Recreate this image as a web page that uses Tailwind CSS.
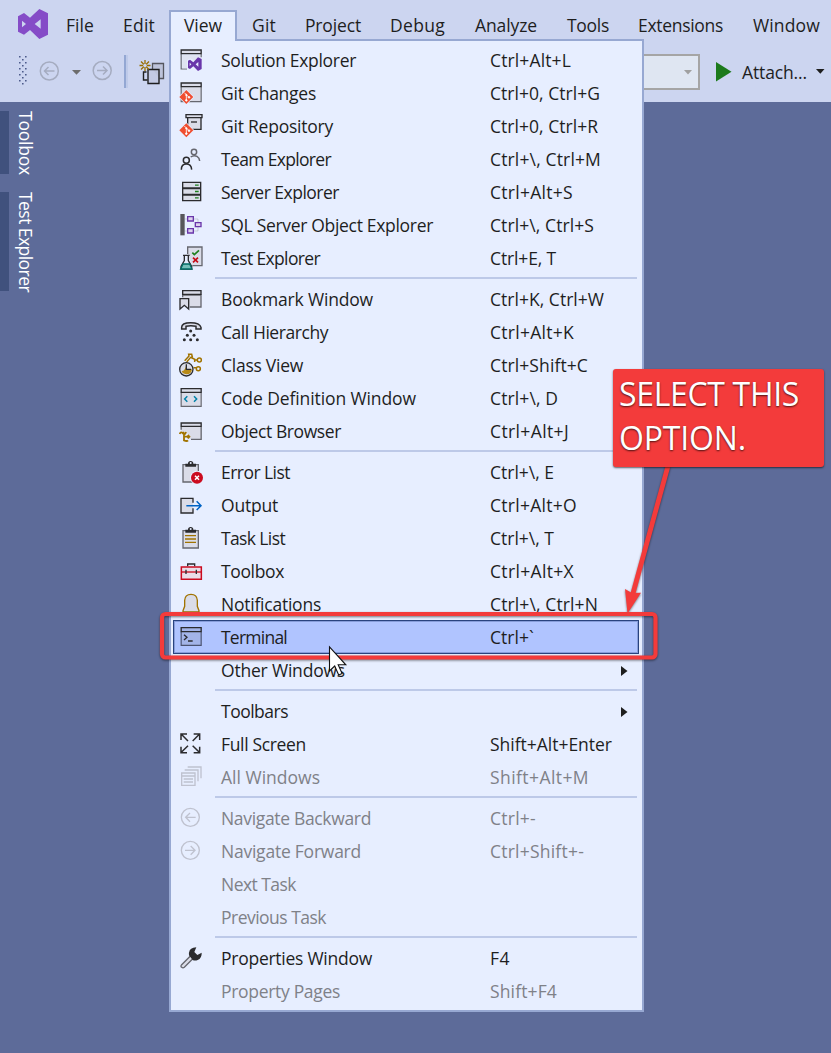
<!DOCTYPE html>
<html lang="en">
<head>
<meta charset="utf-8">
<title>Visual Studio – View menu</title>
<script src="https://cdn.jsdelivr.net/npm/@tailwindcss/browser@4"></script>
</head>
<body class="relative w-[831px] h-[1053px] overflow-hidden bg-[#5d6b99] font-['Open_Sans','Noto_Sans',sans-serif] text-[17.5px] leading-[33px] text-[#1e1e1e] whitespace-nowrap">

<header class="h-[102px] bg-[#ccd5f0] flex flex-col">
  <nav class="h-[50px] mb-[2px] flex items-center">
    <svg class="w-[66px] h-[52px] shrink-0 self-start" viewBox="0 0 198 156"><path fill="#854cc7" fill-rule="evenodd" d="M118 27l26 13v64l-26 13-28-27-18 14-18-9V49l18-10 18 14zM122 58v28l-18-14zM66 62v20l12-10z"/></svg>
    <span class="w-[57px]"><span data-w="28">File</span></span>
    <span class="w-[129px]"><span data-w="32">Edit</span></span>
    <span class="w-[53px]"><span data-w="24">Git</span></span>
    <span class="w-[85px]"><span data-w="56">Project</span></span>
    <span class="w-[85px]"><span data-w="55">Debug</span></span>
    <span class="w-[92px]"><span data-w="62">Analyze</span></span>
    <span class="w-[71px]"><span data-w="42">Tools</span></span>
    <span class="w-[115px]"><span data-w="85">Extensions</span></span>
    <span data-w="67">Window</span>
  </nav>
  <div class="h-[50px] flex">
    <svg class="w-[170px] h-[50px] shrink-0" viewBox="0 52 170 50" fill="none">
      <defs><pattern id="grip" x="19" y="56" width="6" height="6" patternUnits="userSpaceOnUse"><path fill="#4d5c8c" d="M0 0h1.6v1.6H0zM3 3h1.6v1.6H3z"/></pattern></defs>
      <path fill="url(#grip)" d="M19 56h8v29h-8z"/>
      <g stroke="#a5acc0" stroke-width="1.5"><circle cx="49.3" cy="71" r="9"/><path d="M54.5 71h-10m4-4l-4 4 4 4"/><circle cx="102.2" cy="70.5" r="9"/><path d="M97 70.500h10m-4-4l4 4-4 4"/></g>
      <path fill="#6d6d6d" d="M72 70h9l-4.500 4.800z"/>
      <path fill="#93a7d3" d="M124 55h2v33h-2z"/><path fill="#becae9" d="M126 55h2v33h-2z"/>
      <path d="M152.500 69v-5.500h11v15h-4" fill="#bdc3da" stroke="#55565e" stroke-width="1.300"/>
      <path d="M146.500 72h-3v8h4" stroke="#1e1e1e" stroke-width="1.400"/><path d="M148 69.500h11v14h-11z" stroke="#1e1e1e" stroke-width="1.400" fill="#bdc3da" fill-opacity=".6"/>
      <g stroke="#996f00" stroke-width="1.300"><path d="M145 60v11M139.500 65.500h11M141 61.500l8 8M149 61.500l-8 8"/></g><circle cx="145" cy="65.500" r="1.800" fill="#ccd5f0"/>
    </svg>
    <div class="w-[530px] h-[36px] mt-[2px] border-2 border-[#a5a5a5] bg-[#dfe6f2] flex items-center justify-end pr-[6px]"><svg class="w-[8px] h-[5px]" viewBox="0 0 8 5"><path fill="#a0a0a0" d="M0 0h8L4 4.500z"/></svg></div>
    <svg class="w-[16px] h-[20px] ml-4 mt-[10px]" viewBox="0 0 16 20"><path fill="#1c7a1c" d="M0 0l15.500 9.700L0 19.500z"/></svg>
    <span class="ml-[10px] mt-[4px] w-[75px]"><span data-w="65">Attach...</span></span>
    <svg class="w-[9px] h-[5px] mt-[17px] -ml-[1px]" viewBox="0 0 9 5"><path fill="#1e1e1e" d="M0 0h8.500L4.300 4.800z"/></svg>
  </div>
</header>

<aside class="w-[42px] pt-[9px] flex flex-col gap-[18px] text-white">
  <div class="h-[63px] border-l-[9px] border-[#40517d] [writing-mode:vertical-rl] leading-[32px]"><span data-w="64">Toolbox</span></div>
  <div class="h-[99px] border-l-[9px] border-[#40517d] [writing-mode:vertical-rl] leading-[32px]"><span data-w="100">Test Explorer</span></div>
</aside>

<!-- Open drop-down -->
<div class="absolute left-[169px] top-[39px] w-[475px] h-[973px] border-2 border-[#97a8d2] bg-[#e7eeff] pt-[3px]">
  <ul id="menu"></ul>
</div>
<div class="absolute left-[169px] top-[10px] w-[68px] h-[31px] border-2 border-b-0 border-[#97a8d2] bg-[#e7eeff] pl-[13px] leading-[27px]"><span data-w="38">View</span></div>

<!-- Annotation and pointer -->
<svg class="absolute inset-0 w-[831px] h-[1053px] drop-shadow-[0_1px_1px_rgba(0,0,0,0.5)]" viewBox="0 0 831 1053" fill="none">
  <rect x="162" y="614" width="493.500" height="43.500" rx="3.500" stroke="#f33b3b" stroke-width="4.200"/>
  <path d="M668 466L632 597" stroke="#f33b3b" stroke-width="4.800"/>
  <path d="M627.500 613.500L625 589l7 4 9-.3z" fill="#f33b3b"/>
</svg>
<div class="absolute left-[613px] top-[369px] w-[211px] h-[98px] rounded-[3px] bg-[#f33b3b] text-white text-[32px] leading-[44px] pl-[6px] pt-[3px] shadow-[0_1px_2px_rgba(0,0,0,0.6)] [text-shadow:0_1px_2px_rgba(0,0,0,0.7)]"><div><span data-w="180" data-size="32">SELECT THIS</span></div><div><span data-w="127" data-size="32">OPTION.</span></div></div>
<svg class="absolute left-[328px] top-[645px] w-[20px] h-[32px]" viewBox="0 0 20 32"><path d="M1.500 2v24l5.200-5 4 9 3.400-1.600-3.900-8.600h7.600z" fill="#fff" stroke="#111" stroke-width="1.100"/></svg>

<script>
// Icons share a 72-unit canvas drawn at 24px.
const D = '#2b2b2e', G = '#66676f', F = '#dadce8';
const gem = (x, y) => `<path d="M${x} ${y-24}l24 24-24 24-24-24z" fill="#e7eeff"/><path d="M${x} ${y-21}l21 21-21 21-21-21z" fill="#f04e30"/><g stroke="#fff" stroke-width="2.500" fill="#fff"><path d="M${x-6} ${y-13}l6 6v18M${x} ${y-7}l9 9" fill="none"/><circle cx="${x}" cy="${y+10}" r="2.500"/><circle cx="${x+8}" cy="${y+1}" r="2.500"/><circle cx="${x}" cy="${y-6}" r="2"/></g>`;
const win = (y, b) => `<path d="M6.500 ${y+12}V${b}H66.500V${y+12}" fill="${F}" stroke="${G}" stroke-width="3.500"/><path d="M6.500 ${y}h60v11h-60z" fill="${F}" stroke="${D}" stroke-width="4"/>`;
const clip = `<path d="M12 14h46v52H12z" fill="${F}" stroke="${G}" stroke-width="4"/><path d="M19 20v-9h8a8 8 0 0 1 16 0h8v9z" fill="${D}"/><circle cx="35" cy="9" r="3" fill="#e7eeff"/>`;
const I = {
 sol: `<path d="M6.500 18v45H24M66.500 18v10" stroke="${G}" stroke-width="3.500"/><path d="M10 20h53v10L48 40l-14-9-10 6v24H10z" fill="#dfe3f1"/><path d="M6.500 6h60v11h-60z" fill="${F}" stroke="${D}" stroke-width="4"/><path d="M57 28l11 5v30l-11 6-14-14-10 8-6-3V38l6-3 10 8zm1 14v14l-8-7zM32 44v10l5-5z" fill="#6936aa" fill-rule="evenodd"/>`,
 gitc: win(6,62)+gem(22,48),
 gitr: `<path d="M26 12v34h40V12" fill="${F}" stroke="${D}" stroke-width="4"/><path d="M21 2h48v9H21z" fill="${F}" stroke="${D}" stroke-width="4"/><path d="M36 24h18" stroke="${D}" stroke-width="4"/>`+gem(22,49),
 team: `<g stroke-width="4.500"><g stroke="${G}"><circle cx="45" cy="15" r="8"/><path d="M35 30q10-7 19-2 7 4 8 14"/></g><g stroke="${D}"><circle cx="22" cy="40" r="9"/><path d="M7 68q0-17 15-17t16 17"/></g></g>`,
 server: `<g stroke="${D}" stroke-width="4" fill="${F}"><path d="M11 7h54v17H11zM11 26h54v17H11zM11 45h54v17H11z"/></g><path d="M48 15.500h11M48 34.500h11M48 53.500h11" stroke="#1f801f" stroke-width="4"/>`,
 sql: `<path d="M4 3h13v64H4z" fill="#56565b"/><path d="M17 18h7M17 54h7M43 18h14v10M43 54h14V42" stroke="${G}" stroke-width="2" stroke-opacity=".4"/><path d="M26 11h17v13H26zM49 29h17v12H49zM26 47h17v13H26z" stroke="#6936aa" fill="#ddd2ef" stroke-width="4"/>`,
 test: `<path d="M26 24V3h43v56H40" fill="${F}" stroke="${G}" stroke-width="4"/><path d="M40 20l6 6 14-13" stroke="#1f801f" stroke-width="5"/><path d="M42 35l15 14m0-14L42 49" stroke="#c50b17" stroke-width="5"/><path d="M12 28h20M16 28v16L6 61v8h32v-8L28 44V28" stroke="${D}" stroke-width="4" fill="#e7eeff"/><path d="M12 54h20l7 15H5z" fill="#75bfb9" stroke="#006b64" stroke-width="4"/>`,
 book: `<path d="M32 60h34V24H11v7" fill="${F}" stroke="${G}" stroke-width="4"/><path d="M11 11h55v11H11z" fill="${F}" stroke="${D}" stroke-width="4"/><path d="M3 35h26v31L16 55 3 66z" fill="${F}" stroke="${D}" stroke-width="4"/>`,
 call: `<path d="M8 22Q8 8 35 8t31 14v5H51v-8q-16-3-30 0v8H8z" fill="${F}" stroke="${D}" stroke-width="4.500"/><g fill="${D}"><circle cx="35" cy="33" r="4.500"/><circle cx="25" cy="46" r="4.500"/><circle cx="45" cy="46" r="4.500"/><circle cx="16" cy="59" r="4.500"/><circle cx="35" cy="59" r="4.500"/><circle cx="55" cy="59" r="4.500"/></g>`,
 cls: `<g stroke="#a17300" stroke-width="4.500"><path d="M17 23L30 9l-1-5h9l2 8-5 1-12 14M35 13l12 6v8M46 21h10M44 44h7"/><circle cx="61" cy="21" r="6"/><circle cx="58" cy="47" r="6"/></g><circle cx="22" cy="49" r="20" fill="${F}" stroke="${D}" stroke-width="4"/><path d="M22 32v17h17q-1 15-17 15-12-2-14-10 12 0 14-22" fill="#b88a16"/><path d="M22 34v15h14" stroke="${D}" stroke-width="4"/>`,
 code: win(8,61)+`<path d="M25 31l-8 8 8 8M45 31l8 8-8 8" stroke="#0080a8" stroke-width="4.500"/>`,
 obj: `<path d="M6.500 24v11l22 10v16h38V24z" fill="${F}"/><path d="M6.500 23v9M36 61h30.500V23" stroke="${G}" stroke-width="4"/><path d="M6.500 12h60v10h-60z" fill="${F}" stroke="${D}" stroke-width="4"/><path d="M2 45q4-9 10-2t9-4M15 44v20q9 4 12 0M16 53h15M26 48l5 5-5 5M12 39l4 6" stroke="#a17300" stroke-width="5.500"/>`,
 err: clip+`<circle cx="54" cy="53" r="21" fill="#e7eeff"/><circle cx="54" cy="53" r="18" fill="#cb0b1f"/><path d="M48 47l12 12m0-12L48 59" stroke="#fff" stroke-width="4.500"/>`,
 out: `<path d="M42 29V16H6v44h36V46" fill="${F}" stroke="${D}" stroke-width="4"/><path d="M22 38h42M53 25l13 13-13 13" stroke="#0063c4" stroke-width="4.500"/>`,
 task: clip+`<path d="M18 29h33M18 39h33M18 49h33" stroke="#a17300" stroke-width="4"/>`,
 tool: `<path d="M26 22v-7h21v7" stroke="${D}" stroke-width="4"/><path d="M7 24h60v37H7z" fill="#eadde8" stroke="#cb0b1f" stroke-width="4.500"/><path d="M7 39h60" stroke="#cb0b1f" stroke-width="4"/><path d="M21 32v13M52 32v13" stroke="${D}" stroke-width="4"/>`,
 bell: `<path d="M12 56l5-13V25Q18 7 36 7t19 18v18l5 13v4H12z" fill="${F}" stroke="#a17300" stroke-width="4"/><path d="M29 64q7 7 14 0" stroke="#a17300" stroke-width="4"/>`,
 term: `<path d="M6.500 20v41h60V20" fill="#a3b4e8" stroke="#4b5370" stroke-width="3.500"/><path d="M6.500 8h60v12h-60z" fill="#a3b4e8" stroke="${D}" stroke-width="4"/><path d="M15 29l9 8-9 8M27 48h14" stroke="${D}" stroke-width="4"/>`,
 full: `<path d="M6 24V6h18M44 6h18v18M6 44v18h18M44 62h18V44M7 7l20 20M61 7L41 27M7 61l20-20M61 61L41 41" stroke="${D}" stroke-width="4.500"/>`,
 all: `<g stroke="#bfc2cf" stroke-width="4"><path d="M26 6h40v34M17 15h40v34M8 24h40v37H8zM8 33h40M14 42h28M14 51h28"/></g>`,
 back: `<g stroke="#bfc2cf" stroke-width="4"><circle cx="34" cy="34" r="27"/><path d="M50 34H20m13-13L20 34l13 13"/></g>`,
 fwd: `<g stroke="#bfc2cf" stroke-width="4"><circle cx="34" cy="34" r="27"/><path d="M18 34h30M35 21l13 13-13 13"/></g>`,
 prop: `<path d="M8 56l27-27 8 8-27 27q-4 3-8 0t0-8z" fill="${F}" stroke="${G}" stroke-width="4"/><path d="M30 28Q28 9 43 5l9-1-6 14 9 9 13-7q1 16-12 22-8 3-15 0z" fill="${D}"/>`
};
// icon, label, label width, shortcut, shortcut width, state
const rows = [
['sol','Solution Explorer',136,'Ctrl+Alt+L',82],['gitc','Git Changes',96,'Ctrl+0, Ctrl+G',111],['gitr','Git Repository',113,'Ctrl+0, Ctrl+R',109],['team','Team Explorer',111,'Ctrl+\\, Ctrl+M',112],['server','Server Explorer',119,'Ctrl+Alt+S',84],['sql','SQL Server Object Explorer',213,'Ctrl+\\, Ctrl+S',105],['test','Test Explorer',100,'Ctrl+E, T',67],0,
['book','Bookmark Window',153,'Ctrl+K, Ctrl+W',115],['call','Call Hierarchy',108,'Ctrl+Alt+K',85],['cls','Class View',83,'Ctrl+Shift+C',99],['code','Code Definition Window',196,'Ctrl+\\, D',69],['obj','Object Browser',121,'Ctrl+Alt+J',80],0,
['err','Error List',70,'Ctrl+\\, E',65],['out','Output',58,'Ctrl+Alt+O',88],['task','Task List',65,'Ctrl+\\, T',65],['tool','Toolbox',64,'Ctrl+Alt+X',85],['bell','Notifications',101,'Ctrl+\\, Ctrl+N',109],['term','Terminal',67,'Ctrl+`',45,'sel'],['','Other Windows',125,'',0,'sub'],0,
['','Toolbars',68,'',0,'sub'],['full','Full Screen',86,'Shift+Alt+Enter',123],['all','All Windows',100,'Shift+Alt+M',100,'off'],0,
['back','Navigate Backward',151,'Ctrl+-',47,'off'],['fwd','Navigate Forward',141,'Ctrl+Shift+-',95,'off'],['','Next Task',76,'',0,'off'],['','Previous Task',106,'',0,'off'],0,
['prop','Properties Window',152,'F4',21],['','Property Pages',120,'Shift+F4',68,'off']];
document.getElementById('menu').innerHTML = rows.map(r => {
  if (!r) return '<li class="h-[8px] pt-[2px] pl-[44px] pr-[5px]"><div class="h-[2px] bg-[#bdc9e8]"></div></li>';
  const [i,t,w,k,kw,s] = r;
  const cls = s === 'off' ? 'h-[33px] flex items-center pl-2 text-[#7f8188]' : s === 'sel' ? 'h-[34px] -mt-px flex items-center ml-[2px] mr-[3px] pl-[5px] border border-[#29437f] bg-[#b0c4ff] shadow-[inset_0_0_0_1px_rgba(60,85,150,0.35)] leading-[32px]' : 'h-[33px] flex items-center pl-2';
  return `<li class="${cls}"><svg class="w-6 h-6 shrink-0 -mt-px" viewBox="0 0 72 72" fill="none">${I[i]||''}</svg><span class="ml-[17px] pl-px w-[270px]"><span data-w="${w-1}">${t}</span></span><span class="w-[130px]"><span data-w="${kw-1}">${k}</span></span>${s==='sub'?'<svg class="w-[7px] h-[10px] ml-px" viewBox="0 0 7 10"><path fill="#1e1e1e" d="M0 0l6.500 5L0 10z"/></svg>':''}</li>`;
}).join('');
const ctx = document.createElement('canvas').getContext('2d');
document.querySelectorAll('[data-w]').forEach(e => {
  const t = e.textContent;
  if (!t) return;
  ctx.font = (e.dataset.size || 17.5) + 'px "Open Sans"';
  e.style.letterSpacing = ((e.dataset.w - ctx.measureText(t).width) / t.length).toFixed(3) + 'px';
});
</script>
</body>
</html>
